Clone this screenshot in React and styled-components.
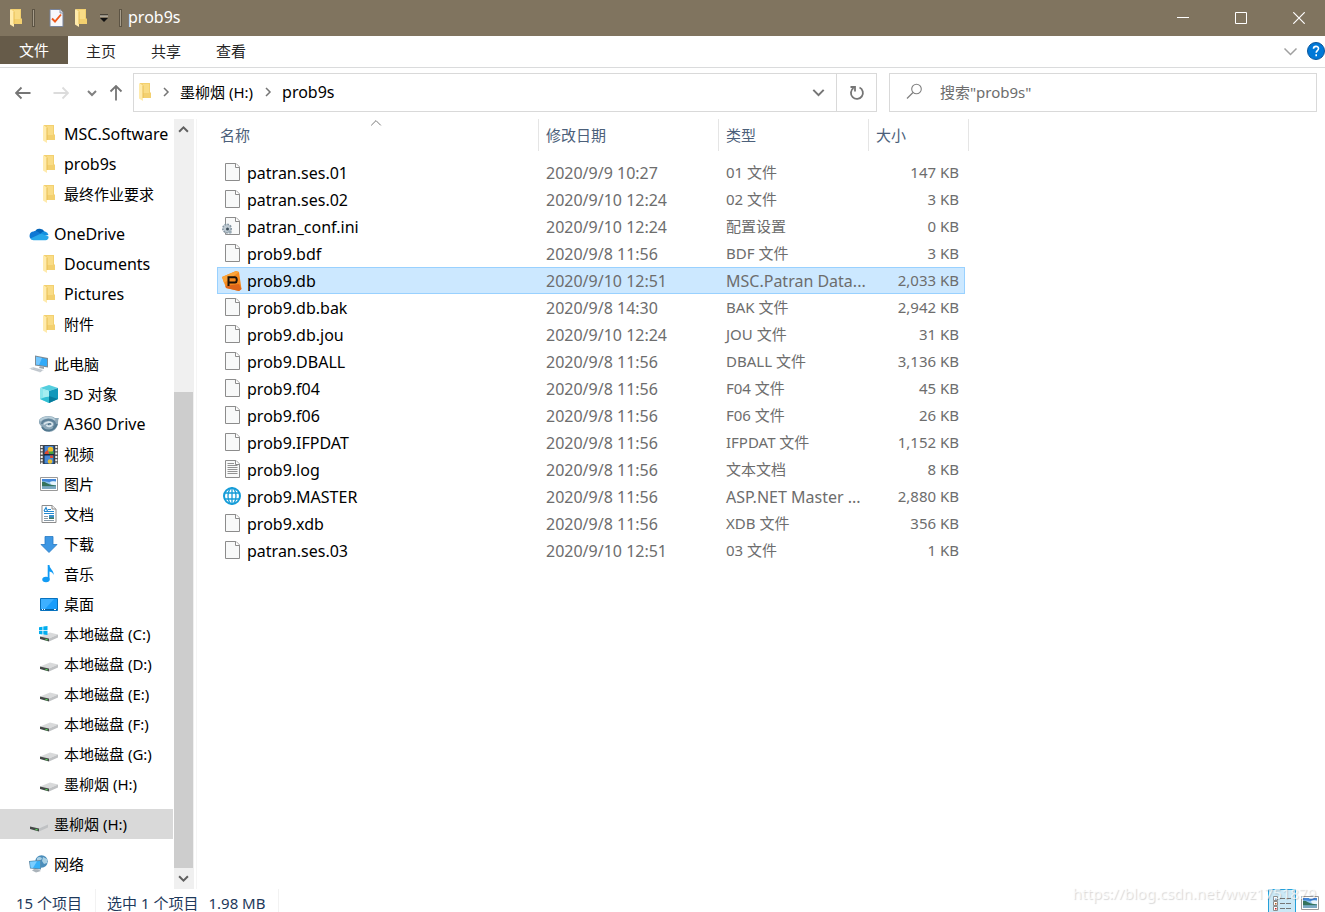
import React from 'react';
import styled, { createGlobalStyle } from 'styled-components';

const GlobalStyle = createGlobalStyle`
  * { box-sizing: border-box; }
  body { margin: 0; background: #fff; overflow: hidden; }
  body, button, input {
    font-family: "Noto Sans", "Noto Sans CJK SC", sans-serif;
    font-size: 15px;
    line-height: 20px;
  }
  button { border: 0; padding: 0; background: none; color: inherit; display: flex; align-items: center; justify-content: center; }
  svg { display: block; flex: none; }
`;

const Window = styled.div`
  position: relative;
  display: flex;
  flex-direction: column;
  min-height: 100vh;
  color: #000;
`;

/* ---------- title bar ---------- */
const TitleBar = styled.header`
  display: flex;
  align-items: center;
  height: 36px;
  padding-left: 10px;
  background: #80745f;
  color: #fff;
`;
const QuickAccess = styled.div`
  display: flex;
  align-items: center;
  height: 36px;
`;
const QuickButton = styled.button`
  width: ${(p) => p.$width}px;
  height: 36px;
`;
const TitleDivider = styled.span`
  width: 3px;
  height: 18px;
  margin: 0 ${(p) => p.$gap}px;
  border: 1px solid #5d5444;
  background: #a79d8b;
`;
const Title = styled.h1`
  margin: 0 auto 0 0;
  padding-bottom: 2px;
  font-size: 16px;
  font-weight: 400;
`;
const WindowControls = styled.div`
  display: flex;
  gap: 6px;
`;
const ControlButton = styled.button`
  width: 52px;
  height: 36px;
`;

/* ---------- ribbon ---------- */
const Ribbon = styled.nav`
  display: flex;
  gap: 1px;
  height: 32px;
  border-bottom: 1px solid #dadbdc;
`;
const Tab = styled.button`
  height: 30px;
  padding: 0 17px;
  color: #262626;
`;
const FileTab = styled(Tab)`
  height: 28px;
  width: 68px;
  background: #665b49;
  color: #fff;
`;
const RibbonTools = styled.div`
  display: flex;
  align-items: center;
  gap: 9px;
  height: 30px;
  margin-left: auto;
`;

/* ---------- address row ---------- */
const AddressRow = styled.div`
  display: flex;
  align-items: center;
  padding: 5px 8px 7px 8px;
`;
const History = styled.div`
  display: flex;
  align-items: center;
  width: 125px;
  height: 39px;
`;
const HistoryButton = styled.button`
  width: ${(p) => p.$width}px;
  height: 39px;
`;
const AddressBox = styled.div`
  display: flex;
  align-items: center;
  flex: 742 1 0;
  height: 39px;
  margin-right: 12px;
  border: 1px solid #d9d9d9;
`;
const Crumbs = styled.div`
  display: flex;
  align-items: center;
  flex: 1;
  padding: 0 0 2px 5px;
`;
const Crumb = styled.button`
  font-size: ${(p) => (p.$latin ? 16 : 15)}px;
`;
const CrumbArrow = styled.span`
  display: flex;
  justify-content: center;
  width: 29px;
`;
const AddressButton = styled.button`
  width: ${(p) => (p.$divided ? 40 : 36)}px;
  height: 37px;
  border-left: ${(p) => (p.$divided ? '1px solid #d9d9d9' : '0')};
`;
const SearchBox = styled.label`
  display: flex;
  align-items: center;
  flex: 410 1 0;
  gap: 17px;
  height: 39px;
  padding: 0 0 2px 16px;
  border: 1px solid #d9d9d9;
`;
const SearchInput = styled.input`
  flex: 1;
  min-width: 0;
  border: 0;
  padding: 0;
  outline: 0;
  background: none;
  &::placeholder { color: #6d6d6d; opacity: 1; }
`;

/* ---------- body ---------- */
const Body = styled.div`
  display: flex;
  flex: 1;
`;
const Sidebar = styled.nav`
  display: flex;
  flex-direction: column;
  gap: 10px;
  flex: none;
  width: 173px;
  padding-bottom: 10px;
`;
const TreeList = styled.ul`
  margin: 0;
  padding: 0;
  list-style: none;
`;
const TreeLink = styled.a`
  display: flex;
  align-items: center;
  gap: 5px;
  height: 30px;
  padding-left: ${(p) => (p.$root ? 29 : 39)}px;
  background: ${(p) => (p.$active ? '#d9d9d9' : 'transparent')};
  color: #000;
  font-size: ${(p) => (p.$latin ? 16 : 15)}px;
  text-decoration: none;
  white-space: nowrap;
`;
const TreeIcon = styled.span`
  display: flex;
  justify-content: center;
  width: 20px;
`;
const ScrollBar = styled.div`
  display: flex;
  flex-direction: column;
  flex: none;
  width: 20px;
  margin-left: 1px;
  padding-right: 1px;
  background: #f0f0f0;
`;
const ScrollButton = styled.button`
  height: 21px;
`;
const ScrollTrack = styled.div`
  display: flex;
  flex-direction: column;
  flex: 1;
  &::before { content: ""; flex: 252; }
`;
const ScrollThumb = styled.div`
  flex: 476;
  background: #cdcdcd;
`;
const Content = styled.main`
  flex: 1;
  min-width: 0;
  margin-left: 2px;
  padding-left: 20px;
  border-left: 1px solid #f5f5f5;
`;
const FileTable = styled.table`
  table-layout: fixed;
  width: 752px;
  border-collapse: separate;
  border-spacing: 0;
`;
const HeadCell = styled.th`
  position: relative;
  height: 40px;
  padding: 0;
  vertical-align: top;
  text-align: left;
  font-weight: 400;
  color: #4c607a;
`;
const HeadLabel = styled.div`
  height: 32px;
  padding: 6px 0 0 ${(p) => (p.$first ? 3 : 7)}px;
  border-right: 1px solid #e5e5e5;
`;
const SortMark = styled.span`
  position: absolute;
  top: -2px;
  left: 50%;
  margin-left: -8px;
`;
const Cell = styled.td`
  height: 27px;
  padding: 0 ${(p) => (p.$end ? 0 : 3)}px ${(p) => (p.$latin ? 0 : 2)}px 7px;
  overflow: hidden;
  white-space: nowrap;
  text-overflow: ellipsis;
  text-align: ${(p) => (p.$end ? 'right' : 'left')};
  font-size: ${(p) => (p.$latin ? 16 : 15)}px;
  line-height: 20px;
  color: #6d6d6d;
`;
const NameCell = styled(Cell)`
  padding-left: 5px;
  color: #000;
`;
const NameLine = styled.div`
  display: flex;
  align-items: center;
  gap: 5px;
`;
const FileIcon = styled.span`
  display: flex;
  justify-content: center;
  width: 20px;
  height: 20px;
`;
const TailCell = styled.td`
  padding: 0;
`;
const Row = styled.tr`
  ${(p) => p.$selected && `
    background: #cce8ff;
    td { border-top: 1px solid #99d1ff; border-bottom: 1px solid #99d1ff; }
    td:first-child { border-left: 1px solid #99d1ff; padding-left: 4px; }
    td:last-child { border-right: 1px solid #99d1ff; }
  `}
`;

/* ---------- status bar ---------- */
const StatusBar = styled.footer`
  display: flex;
  align-items: flex-start;
  height: 23px;
  padding: 0 6px 0 16px;
  overflow: hidden;
  color: #1e395b;
`;
const StatusText = styled.span`
  margin-right: ${(p) => (p.$tight ? 10 : 13)}px;
  padding-top: 4px;
`;
const StatusDivider = styled.span`
  width: 1px;
  height: 23px;
  margin-right: 11px;
  background: #f2f2f2;
`;
const ViewButtons = styled.div`
  display: flex;
  gap: 5px;
  margin-left: auto;
`;
const ViewButton = styled.button`
  height: 28px;
  width: ${(p) => (p.$active ? 28 : 18)}px;
  border: ${(p) => (p.$active ? '1px solid #26a0da' : '0')};
  background: ${(p) => (p.$active ? '#cbe8f6' : 'none')};
`;
const Watermark = styled.span`
  position: absolute;
  right: 9px;
  bottom: 9px;
  color: rgba(255, 255, 255, 0.7);
  text-shadow: 1px 1px 1px rgba(0, 0, 0, 0.16);
  pointer-events: none;
`;

/* ---------- drawings ---------- */
const Folder = () => (
  <svg width="12" height="18" viewBox="0 0 12 18">
    <path d="M1 0H11V9L12 10V15H1Z" fill="#f3d06f" />
    <path d="M4 1H10V10H4Z" fill="#f9dc86" />
    <path d="M0 0L4 2.5V18L0 15.5Z" fill="#ffebac" />
    <path d="M4 2.5V15" stroke="#e8bd53" strokeWidth="1" />
  </svg>
);
const Chevron = ({ dir = 'down', w = 10, color = '#606060', stroke = 2 }) => {
  const turn = { down: 0, up: 180, right: -90 }[dir];
  return (
    <svg width={w} height={w} viewBox="0 0 10 10">
      <path d="M1 3L5 7L9 3" fill="none" stroke={color} strokeWidth={(stroke * 10) / w} transform={`rotate(${turn} 5 5)`} />
    </svg>
  );
};
const Arrow = ({ turn = 0, color = '#757575' }) => (
  <svg width="16" height="16" viewBox="0 0 16 16">
    <path d="M1 8H15.500M6.500 2.500L1 8L6.500 13.500" fill="none" stroke={color} strokeWidth="1.800" transform={`rotate(${turn} 8 8)`} />
  </svg>
);
const CheckDoc = () => (
  <svg width="15" height="18" viewBox="0 0 15 18">
    <path d="M1 .5H11L14 3.500V17.500H1Z" fill="#f7f8fb" stroke="#78839b" />
    <path d="M11 .5V4H14" fill="#dfe3ec" stroke="#78839b" strokeWidth=".8" />
    <path d="M3 9.500L6 12.500L12 5.500" fill="none" stroke="#ee5a1c" strokeWidth="1.900" />
  </svg>
);
const Cloud = () => (
  <svg width="20" height="14" viewBox="0 0 20 14">
    <path d="M5.500 5.500A5.500 5.500 0 0 1 15.500 4.500L12 9L4 7Z" fill="#0364b8" />
    <path d="M4.500 4.500C7 3.500 8.500 4.500 10 5.500L13 8L3 12.500A4.200 4.200 0 0 1 4.500 4.500Z" fill="#0f78d4" />
    <path d="M12 6.500C13 4.500 15 4.200 16 4.500A4.500 4.500 0 0 1 19.500 8L14 9Z" fill="#1490df" />
    <path d="M1.500 11.500L12 6.500L19.500 9.500C20 11.500 18.500 13.200 16.500 13.200H4.500C3 13.200 2 12.500 1.500 11.500Z" fill="#28a8ea" />
  </svg>
);
const Computer = () => (
  <svg width="20" height="18" viewBox="0 0 20 18">
    <path d="M6 .5L19 3V12.500L6 10.500Z" fill="#7d8b95" />
    <path d="M7 1.700L18 4V11.300L7 9.400Z" fill="#32aaf8" />
    <path d="M7 1.700L13 3L10 9.900L7 9.400Z" fill="#73c7ff" />
    <path d="M11 11.300L15 12V14L10 13Z" fill="#9ba3aa" />
    <path d="M0 13.500L4 12L15 15L11 17.500Z" fill="#d7dce1" />
    <path d="M2 13.800L12 16.400M4 13L13 15.500" stroke="#a9b2ba" strokeWidth=".6" />
  </svg>
);
const Cube = () => (
  <svg width="18" height="18" viewBox="0 0 18 18">
    <path d="M0 3L9 0L18 3L9 6Z" fill="#54cede" />
    <path d="M0 3L9 6V18L0 14Z" fill="#8be6ec" />
    <path d="M18 3L9 6V18L18 14Z" fill="#1298bb" />
    <path d="M0 14L9 11V18Z" fill="#32bfd3" />
    <path d="M9 11L18 14L9 18Z" fill="#067c9d" />
    <path d="M3 5L9 6V12L3 12Z" fill="#b6f4f4" opacity=".6" />
  </svg>
);
const Swirl = () => (
  <svg width="20" height="18" viewBox="0 0 20 18">
    <path d="M0 5C3 0 13 0 16 3L20 3C19 5 19 7 19 9C18 14 14 17 10 17C6 17 3 14 2 11C0 9 -1 7 0 5Z" fill="#8fa9b9" />
    <path d="M1 6C4 2 12 1 16 5" fill="none" stroke="#b9ced9" strokeWidth="1.800" />
    <path d="M3 9C3 5 9 4 13 5.500C17 7 17 11 14 12.500" fill="none" stroke="#5f8299" strokeWidth="2" />
    <path d="M5 9.500C6 7 11 6.500 13 8.500C14 11 9 12.500 7.500 10" fill="none" stroke="#dbe7ee" strokeWidth="1.800" />
    <path d="M3 12C6 17 15 17 18 9" fill="none" stroke="#537990" strokeWidth="1.700" />
    <path d="M9 9.500C10 8.500 12 8.500 12 9.500" fill="none" stroke="#365e78" strokeWidth="1.200" />
  </svg>
);
const Film = () => (
  <svg width="18" height="19" viewBox="0 0 18 19">
    <path d="M0 0H18V19H0Z" fill="#555" />
    <path d="M1.700 1V19M16.300 1V19" stroke="#f2f2f2" strokeWidth="2" strokeDasharray="2 1.300" />
    <path d="M3.500 .5H14.500V19H3.500Z" fill="#172940" />
    <path d="M4.500 1H13.500V9H4.500ZM4.500 10.500H13.500V18.500H4.500Z" fill="#4787d5" />
    <circle cx="10.500" cy="4.500" r="2.700" fill="#f1bd25" />
    <path d="M5 7L8 5L9 9H4.500ZM10 10.500H13V13H10Z" fill="#de4a2f" />
    <path d="M9 6.500H13.500V9H9Z" fill="#43a33e" />
    <circle cx="10" cy="16.500" r="2.300" fill="#e9bf35" />
  </svg>
);
const Picture = () => (
  <svg width="18" height="14" viewBox="0 0 18 14">
    <path d="M.5 .5H17.500V13.500H.5Z" fill="#fff" stroke="#999" />
    <path d="M2 2H16V12H2Z" fill="#8dc4ef" />
    <path d="M2 2H16V4L9 5L2 4Z" fill="#4386d8" />
    <path d="M10 5C12 4 14 4 16 5V8H11Z" fill="#e6f4fd" />
    <path d="M2 5C5 4 7 7 10 7.500L16 8.500V9.500H2Z" fill="#35735d" />
    <path d="M2 9.500H16V12H2Z" fill="#7ba9c2" />
  </svg>
);
const Document = () => (
  <svg width="16" height="18" viewBox="0 0 16 18">
    <path d="M1 .5H11L15 4V17.500H1Z" fill="#fff" stroke="#8c8c8c" />
    <path d="M11 .5V4H15" fill="#eee" stroke="#8c8c8c" />
    <path d="M3 6L5 2.500L6.500 6M7 4.500H10M3 8.500H13M3 6.500H13" fill="none" stroke="#2589d0" strokeWidth="1.200" />
    <path d="M3 11.500H7M3 13.500H7M3 15.500H13" stroke="#8b9ba8" />
    <path d="M8 10H13V14H8Z" fill="#3b91cf" />
    <path d="M8 12.500H13V14H8Z" fill="#407c67" />
  </svg>
);
const Download = () => (
  <svg width="18" height="17" viewBox="0 0 18 17">
    <path d="M5 .5H13V8.500H17L9 16.500L1 8.500H5Z" fill="#3e97e3" stroke="#2678c4" strokeWidth=".8" />
  </svg>
);
const Note = () => (
  <svg width="14" height="18" viewBox="0 0 14 18">
    <ellipse cx="4" cy="14.500" rx="3.700" ry="2.800" fill="#129bf4" />
    <path d="M5.700 14.500V0H7.500C7.500 4 12 5 11.700 10C11 8 9.500 6.800 7.500 6.500V14.500Z" fill="#129bf4" />
  </svg>
);
const Desktop = () => (
  <svg width="18" height="13" viewBox="0 0 18 13">
    <path d="M.5 .5H17.500V12.500H.5Z" fill="#1a9dfb" stroke="#0872be" />
    <path d="M1 1H14L5 11H1Z" fill="#3eb0ff" />
    <path d="M1 11.500H17" stroke="#075f9f" />
    <path d="M2 11.500H3M4 11.500H5M14 11.500H16" stroke="#fff" />
  </svg>
);
const Drive = ({ system }) => (
  <svg width="20" height="16" viewBox="0 0 20 16">
    <path d="M1 10.500L11 6.500L19 8.500L10 12.500Z" fill="#d9dadb" />
    <path d="M10 12.500L19 8.500V11.500L10 15.500Z" fill="#bfc1c3" />
    <path d="M1 10.500L10 12.500V15.500L1 13Z" fill="#454947" />
    <path d="M6.500 13.300L8.500 13.800" stroke="#54d95c" strokeWidth="1.300" />
    {system && (
      <path d="M0 1.200L3.500 .7V4.200H0ZM4.300 .6L8.500 0V4.200H4.300ZM0 5H3.500V8.400L0 8ZM4.300 5H8.500V9L4.300 8.500Z" fill="#00adef" />
    )}
  </svg>
);
const Network = () => (
  <svg width="20" height="18" viewBox="0 0 20 18">
    <circle cx="12.500" cy="6.500" r="6.200" fill="#4a8dbb" />
    <path d="M8 3C10 1 13 2 13 4L10 6L8 8ZM14 2L18 4V8L15 9L13 6Z" fill="#a9d0e4" />
    <path d="M0 6L12 5V14.500L1 13.500Z" fill="#5c8aa8" />
    <path d="M1 6.800L11.200 6V13.500L1.700 12.700Z" fill="#35b0f8" />
    <path d="M1 6.800L8 6.200L4 12.900L1.700 12.700Z" fill="#7bceff" />
    <path d="M5 14L9 14.200L12 16L7 17.500L3 15.500Z" fill="#aab3ba" />
  </svg>
);
const Page = ({ lines }) => (
  <svg width="15" height="18" viewBox="0 0 15 18">
    <path d="M.5 .5H11L14.500 4V17.500H.5Z" fill="#f8f9f9" stroke="#8c8c8c" />
    <path d="M10.500 .5V4.500H14.500" fill="#fff" stroke="#8c8c8c" />
    {lines && <path d="M2.500 3.500H9M2.500 5.500H12.500M2.500 7.500H12.500M2.500 9.500H12.500M2.500 11.500H12.500M2.500 13.500H12.500" stroke="#929292" />}
  </svg>
);
const Settings = () => (
  <svg width="20" height="18" viewBox="0 0 20 18">
    <path d="M3.500 .5H14L17.500 4V17.500H3.500Z" fill="#f8f9f9" stroke="#8c8c8c" />
    <path d="M13.500 .5V4.500H17.500" fill="#fff" stroke="#8c8c8c" />
    <circle cx="5" cy="11.500" r="4.200" fill="#c0cbd3" stroke="#8697a3" strokeWidth="1.600" strokeDasharray="1.700 1.100" />
    <circle cx="5.500" cy="12" r="1.500" fill="#3e4f5b" />
    <circle cx="8" cy="15" r="1.800" fill="#9aabb6" />
  </svg>
);
const Patran = () => (
  <svg width="20" height="20" viewBox="0 0 20 20">
    <path d="M0 6L14 0L17 1L19.500 18L17 20L4 17Z" fill="#f58a1f" />
    <path d="M0 6L14 0L17 1L2 12Z" fill="#fba43a" />
    <path d="M17 13L19.500 18L17 20L4 17L3.500 15Z" fill="#de661a" />
    <path d="M6.500 15V6.200H13A2 2 0 0 1 14.700 8V9.500A2 2 0 0 1 13 11.500H7" fill="none" stroke="#1d1209" strokeWidth="2" />
  </svg>
);
const Globe = () => (
  <svg width="18" height="18" viewBox="0 0 18 18">
    <g fill="#fff" stroke="#159cd8">
      <circle cx="9" cy="9" r="8" strokeWidth="2" />
      <ellipse cx="9" cy="9" rx="4" ry="8" strokeWidth="1.300" />
      <path d="M9 1V17M2 6H16M2 12H16" strokeWidth="1.300" />
    </g>
  </svg>
);
const Details = () => (
  <svg width="18" height="20" viewBox="0 0 18 20">
    <path d="M.5 3.500H4.500V7.500H.5ZM.5 8.500H4.500V12.500H.5ZM.5 13.500H4.500V17.500H.5Z" fill="#fff" stroke="#8c8c8c" />
    <path d="M2 5H3.500V6.500H2Z" fill="#347fc4" />
    <path d="M2 10H3.500V11.500H2Z" fill="#b35c21" />
    <path d="M2 15H3.500V16.500H2Z" fill="#d02020" />
    <path d="M7 5.500H12M13 5.500H18M7 10.500H12M13 10.500H18M7 15.500H12M13 15.500H18" stroke="#777" />
  </svg>
);

/* ---------- data ---------- */
const tree = [
  [['MSC.Software', Folder], ['prob9s', Folder], ['最终作业要求', Folder]],
  [['OneDrive', Cloud, true], ['Documents', Folder], ['Pictures', Folder], ['附件', Folder]],
  [
    ['此电脑', Computer, true], ['3D 对象', Cube], ['A360 Drive', Swirl], ['视频', Film], ['图片', Picture],
    ['文档', Document], ['下载', Download], ['音乐', Note], ['桌面', Desktop],
    ['本地磁盘 (C:)', () => <Drive system />], ['本地磁盘 (D:)', Drive], ['本地磁盘 (E:)', Drive],
    ['本地磁盘 (F:)', Drive], ['本地磁盘 (G:)', Drive], ['墨柳烟 (H:)', Drive],
  ],
  [['墨柳烟 (H:)', Drive, true, true]],
  [['网络', Network, true]],
];

const files = [
  ['patran.ses.01', '2020/9/9 10:27', '01 文件', '147 KB'],
  ['patran.ses.02', '2020/9/10 12:24', '02 文件', '3 KB'],
  ['patran_conf.ini', '2020/9/10 12:24', '配置设置', '0 KB', Settings],
  ['prob9.bdf', '2020/9/8 11:56', 'BDF 文件', '3 KB'],
  ['prob9.db', '2020/9/10 12:51', 'MSC.Patran Data...', '2,033 KB', Patran],
  ['prob9.db.bak', '2020/9/8 14:30', 'BAK 文件', '2,942 KB'],
  ['prob9.db.jou', '2020/9/10 12:24', 'JOU 文件', '31 KB'],
  ['prob9.DBALL', '2020/9/8 11:56', 'DBALL 文件', '3,136 KB'],
  ['prob9.f04', '2020/9/8 11:56', 'F04 文件', '45 KB'],
  ['prob9.f06', '2020/9/8 11:56', 'F06 文件', '26 KB'],
  ['prob9.IFPDAT', '2020/9/8 11:56', 'IFPDAT 文件', '1,152 KB'],
  ['prob9.log', '2020/9/8 11:56', '文本文档', '8 KB', () => <Page lines />],
  ['prob9.MASTER', '2020/9/8 11:56', 'ASP.NET Master ...', '2,880 KB', Globe],
  ['prob9.xdb', '2020/9/8 11:56', 'XDB 文件', '356 KB'],
  ['patran.ses.03', '2020/9/10 12:51', '03 文件', '1 KB'],
];

const isLatin = (text) => /^[\x20-\x7e]+$/.test(text);

export default function App() {
  return (
    <Window>
      <GlobalStyle />
      <TitleBar>
        <QuickAccess>
          <Folder />
          <TitleDivider $gap={10} />
          <QuickButton $width={22} aria-label="属性"><CheckDoc /></QuickButton>
          <QuickButton $width={28} aria-label="新建文件夹"><Folder /></QuickButton>
          <QuickButton $width={18} aria-label="自定义快速访问工具栏">
            <svg width="8" height="8" viewBox="0 0 8 8">
              <path d="M0 1H8" stroke="#111" />
              <path d="M0 2H8" stroke="#ddd8cf" />
              <path d="M0 4H8L4 8Z" fill="#111" />
            </svg>
          </QuickButton>
          <TitleDivider $gap={6} />
        </QuickAccess>
        <Title>prob9s</Title>
        <WindowControls>
          <ControlButton aria-label="最小化">
            <svg width="12" height="12" viewBox="0 0 12 12"><path d="M0 5.500H12" stroke="#fff" /></svg>
          </ControlButton>
          <ControlButton aria-label="最大化">
            <svg width="12" height="12" viewBox="0 0 12 12"><path d="M.5 .5H11.500V11.500H.5Z" fill="none" stroke="#fff" /></svg>
          </ControlButton>
          <ControlButton aria-label="关闭">
            <svg width="12" height="12" viewBox="0 0 12 12"><path d="M.3 .3L11.700 11.700M11.700 .3L.3 11.700" stroke="#fff" strokeWidth="1.200" /></svg>
          </ControlButton>
        </WindowControls>
      </TitleBar>

      <Ribbon>
        <FileTab>文件</FileTab>
        <Tab>主页</Tab>
        <Tab>共享</Tab>
        <Tab>查看</Tab>
        <RibbonTools>
          <button aria-label="展开功能区"><Chevron w={15} color="#a0a0a0" stroke={1.5} /></button>
          <button aria-label="帮助">
            <svg width="18" height="18" viewBox="0 0 18 18">
              <circle cx="9" cy="9" r="8.500" fill="#0078d7" stroke="#0a569c" />
              <path d="M6.500 6.800C6.500 3.600 11.500 3.700 11.500 6.600C11.500 8.600 9.200 8.700 9.200 10.800M9.200 12.300V14.200" fill="none" stroke="#fff" strokeWidth="1.600" />
            </svg>
          </button>
        </RibbonTools>
      </Ribbon>

      <AddressRow>
        <History>
          <HistoryButton $width={30} aria-label="后退"><Arrow /></HistoryButton>
          <HistoryButton $width={46} aria-label="前进"><Arrow turn={180} color="#dcdcdc" /></HistoryButton>
          <HistoryButton $width={15} aria-label="最近浏览的位置"><Chevron w={10} color="#808080" /></HistoryButton>
          <HistoryButton $width={34} aria-label="上移"><Arrow turn={90} /></HistoryButton>
        </History>
        <AddressBox>
          <Crumbs>
            <Folder />
            <CrumbArrow><Chevron dir="right" w={10} color="#757575" stroke={1.5} /></CrumbArrow>
            <Crumb>墨柳烟 (H:)</Crumb>
            <CrumbArrow><Chevron dir="right" w={10} color="#757575" stroke={1.5} /></CrumbArrow>
            <Crumb $latin>prob9s</Crumb>
          </Crumbs>
          <AddressButton aria-label="以前的位置"><Chevron w={13} color="#757575" /></AddressButton>
          <AddressButton $divided aria-label="刷新">
            <svg width="16" height="16" viewBox="0 0 16 16">
              <path d="M10.500 2.500A6 6 0 1 1 4.500 3M1.500 2H6V6.500" fill="none" stroke="#757575" strokeWidth="1.800" />
            </svg>
          </AddressButton>
        </AddressBox>
        <SearchBox>
          <svg width="17" height="17" viewBox="0 0 17 17">
            <circle cx="10.500" cy="6" r="4.800" fill="none" stroke="#808080" strokeWidth="1.100" />
            <path d="M7 9.500L1 15.500" stroke="#808080" strokeWidth="1.200" />
          </svg>
          <SearchInput type="text" aria-label="搜索" placeholder={'搜索"prob9s"'} />
        </SearchBox>
      </AddressRow>

      <Body>
        <Sidebar>
          {tree.map((group, g) => (
            <TreeList key={g}>
              {group.map(([label, Icon, root, active]) => (
                <li key={label}>
                  <TreeLink href="#" $root={root} $active={active} $latin={isLatin(label)}>
                    <TreeIcon><Icon /></TreeIcon>
                    {label}
                  </TreeLink>
                </li>
              ))}
            </TreeList>
          ))}
        </Sidebar>
        <ScrollBar>
          <ScrollButton aria-label="向上滚动"><Chevron dir="up" w={11} /></ScrollButton>
          <ScrollTrack><ScrollThumb /></ScrollTrack>
          <ScrollButton aria-label="向下滚动"><Chevron w={11} /></ScrollButton>
        </ScrollBar>
        <Content>
          <FileTable>
            <colgroup>
              <col style={{ width: 322 }} />
              <col style={{ width: 180 }} />
              <col style={{ width: 150 }} />
              <col style={{ width: 90 }} />
              <col style={{ width: 6 }} />
              <col style={{ width: 4 }} />
            </colgroup>
            <thead>
              <tr>
                <HeadCell>
                  <HeadLabel $first>名称</HeadLabel>
                  <SortMark><Chevron dir="up" w={12} color="#7a7a7a" stroke={1} /></SortMark>
                </HeadCell>
                <HeadCell><HeadLabel>修改日期</HeadLabel></HeadCell>
                <HeadCell><HeadLabel>类型</HeadLabel></HeadCell>
                <HeadCell colSpan={3}><HeadLabel>大小</HeadLabel></HeadCell>
              </tr>
            </thead>
            <tbody>
              {files.map(([name, date, type, size, Icon = Page]) => (
                <Row key={name} $selected={name === 'prob9.db'}>
                  <NameCell $latin>
                    <NameLine><FileIcon><Icon /></FileIcon>{name}</NameLine>
                  </NameCell>
                  <Cell $latin>{date}</Cell>
                  <Cell $latin={isLatin(type)}>{type}</Cell>
                  <Cell $end>{size}</Cell>
                  <TailCell />
                </Row>
              ))}
            </tbody>
          </FileTable>
        </Content>
      </Body>

      <StatusBar>
        <StatusText>15 个项目</StatusText>
        <StatusDivider />
        <StatusText $tight>选中 1 个项目</StatusText>
        <StatusText>1.98 MB</StatusText>
        <StatusDivider />
        <ViewButtons>
          <ViewButton $active aria-label="详细信息"><Details /></ViewButton>
          <ViewButton aria-label="大缩略图"><Picture /></ViewButton>
        </ViewButtons>
      </StatusBar>
      <Watermark>https://blog.csdn.net/wwz1751879</Watermark>
    </Window>
  );
}
